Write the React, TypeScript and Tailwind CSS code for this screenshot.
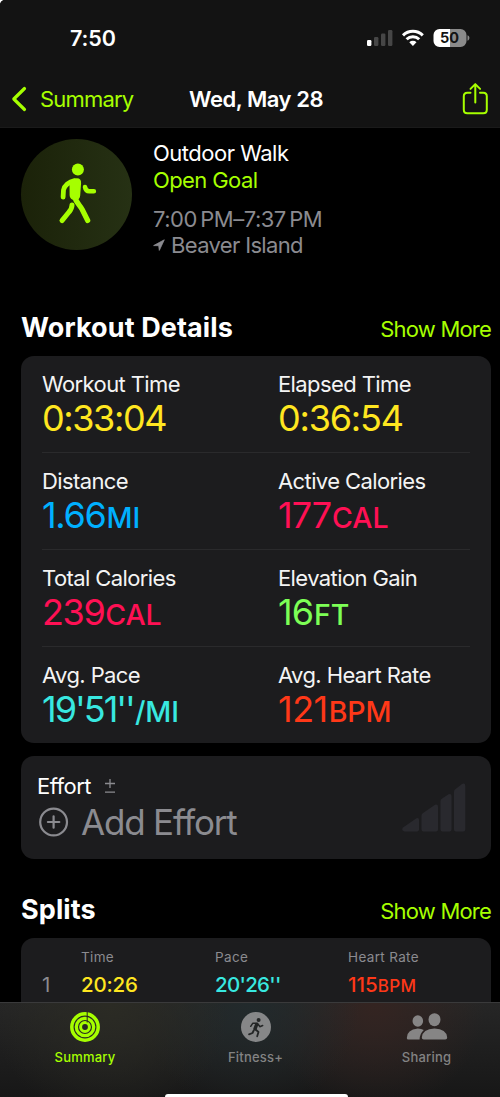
import type { ReactNode } from "react";

interface Metric {
  label: string;
  value: string;
  unit?: string;
  color: string;
  tracking?: string;
}

const METRICS: Metric[][] = [
  [
    { label: "Workout Time", value: "0:33:04", color: "text-[#ffe620]", tracking: "tracking-[-1.4px]" },
    { label: "Elapsed Time", value: "0:36:54", color: "text-[#ffe620]", tracking: "tracking-[-1.2px]" },
  ],
  [
    { label: "Distance", value: "1.66", unit: "MI", color: "text-[#00b0ff]", tracking: "tracking-[-1.3px]" },
    { label: "Active Calories", value: "177", unit: "CAL", color: "text-[#ff1054]" },
  ],
  [
    { label: "Total Calories", value: "239", unit: "CAL", color: "text-[#ff1054]", tracking: "tracking-[-1.4px]" },
    { label: "Elevation Gain", value: "16", unit: "FT", color: "text-[#7dff56]" },
  ],
  [
    { label: "Avg. Pace", value: "19'51''", unit: "/MI", color: "text-[#38e8e0]", tracking: "tracking-[-2px]" },
    { label: "Avg. Heart Rate", value: "121", unit: "BPM", color: "text-[#ff3818]", tracking: "tracking-[-0.5px]" },
  ],
];

function StatusIcons() {
  return (
    <svg width="104" height="20" viewBox="0 0 104 20">
      <rect x="1" y="12" width="4.4" height="6" rx="1.2" fill="#fff" />
      <rect x="8" y="9" width="4.4" height="9" rx="1.2" fill="#464646" />
      <rect x="15" y="5.5" width="4.4" height="12.5" rx="1.2" fill="#464646" />
      <rect x="22" y="2" width="4.4" height="16" rx="1.2" fill="#464646" />
      <g fill="none" stroke="#fff" strokeWidth="3">
        <path d="M37 7.3a14.2 14.2 0 0 1 19.8 0" />
        <path d="M40.6 11.2a9 9 0 0 1 12.6 0" />
      </g>
      <path d="M46.9 17.9 43.3 14.3a5.2 5.2 0 0 1 7.2 0z" fill="#fff" />
      <path d="M84 1h-10.5a6 6 0 0 0-6 6v6a6 6 0 0 0 6 6H84z" fill="#fff" />
      <path d="M84 1h10.5a6 6 0 0 1 6 6v6a6 6 0 0 1-6 6H84z" fill="#8a8a8a" />
      <path d="M101.5 7.3c1.3.5 1.9 1.5 1.9 2.7s-.6 2.2-1.9 2.7z" fill="#8a8a8a" />
      <text x="83.4" y="15.2" textAnchor="middle" className="font-['Inter'] text-[14.5px] font-bold" fill="#131313">
        50
      </text>
    </svg>
  );
}

function WalkIcon() {
  return (
    <svg width="111" height="111" viewBox="0 0 111 111" fill="none" stroke="#a6ff00" strokeLinecap="round" strokeLinejoin="round">
      <circle cx="56.9" cy="30.6" r="6" fill="#a6ff00" stroke="none" />
      <path
        d="M48.5 44.5c1.4-3.2 4.3-5.3 7.3-5.3 3 0 4.5 1.9 4.3 4.7l-.9 12.6c-.2 3.2-2.4 5-5 4.8-3.6-.2-5.6-2.5-5.6-5.6z"
        fill="#a6ff00"
        stroke="none"
      />
      <path d="M53.5 41.6c-5.5 1-10.4 5.3-11 9.4l-.4 7.2" strokeWidth="4.8" />
      <path d="M64 48c.5 2.8 1.9 4.2 4.2 4.2h4.7" strokeWidth="4.5" />
      <path d="M53.5 57.5c1.5 6 5.2 8.5 7.700 13l5.500 11" strokeWidth="5.2" />
      <path d="M51 66c0 2.8-.9 4.6-3 7l-7 8.6" strokeWidth="5" />
    </svg>
  );
}

function EffortBars() {
  return (
    <svg width="64" height="49" viewBox="0 0 64 49" fill="#29292e">
      <path d="M1 44.5 14.5 35.3q2.5-1 2.5 1.7v9.5q0 2-2 2H2.5Q-1 47.5 1 44.5z" />
      <path d="M19.5 32.5q0-1.5 1.3-2.3L33 21.8q3-1 3 2v22.7q0 2-2 2H21.5q-2 0-2-2z" />
      <path d="M38.5 18q0-1.5 1.3-2.3l6.7-4.5q3-1 3 2v33.3q0 2-2 2h-7q-2 0-2-2z" />
      <path d="M52 8.5q0-1.5 1.3-2.3L60 1q3.300-1.5 3.300 2v43.5q0 2-2 2H54q-2 0-2-2z" />
    </svg>
  );
}

function RingsIcon() {
  return (
    <svg width="30" height="30" viewBox="0 0 30 30" fill="none" stroke="#a6ff00" strokeLinecap="round">
      <circle cx="15" cy="15" r="13.2" strokeWidth="3.5" />
      <circle cx="15" cy="15" r="8.7" strokeWidth="3.3" />
      <circle cx="15" cy="15" r="4.4" strokeWidth="3" />
      <path d="M17.2 0v10.5" stroke="#262620" strokeWidth="1" strokeLinecap="butt" />
    </svg>
  );
}

function RunIcon() {
  return (
    <svg width="30" height="30" viewBox="0 0 30 30" fill="none" stroke="#242626" strokeLinecap="round" strokeLinejoin="round">
      <circle cx="15" cy="15" r="15" fill="#868788" stroke="none" />
      <circle cx="17.6" cy="7.9" r="2" fill="#242626" stroke="none" />
      <path d="M15.8 12.2 14 16.8" strokeWidth="3.4" />
      <path d="M15 11.3h-3.3L9.7 14.3" strokeWidth="1.5" />
      <path d="M17.3 12.5l1.5 2.2 2.9-1.2" strokeWidth="1.5" />
      <path d="M14.5 17.5l3 2.5-1.300 4.300" strokeWidth="1.8" />
      <path d="M12.7 18.500l-1.200 2.500-3.500 1.300" strokeWidth="1.8" />
    </svg>
  );
}

function PeopleIcon() {
  return (
    <svg width="42" height="28" viewBox="0 0 42 28" fill="#868585">
      <ellipse cx="11.8" cy="8" rx="5.3" ry="5.8" />
      <ellipse cx="28.5" cy="6.7" rx="6" ry="6.5" />
      <path d="M.8 25q0-8.5 11-9.500 3.500.1 6 1.500-4 3.500-4.200 9.500H2.300Q.8 26.500.8 25z" />
      <path d="M15.8 24.500q.7-8.600 12.700-9 12 .4 12.700 9 0 2-2 2H17.800q-2 0-2-2z" />
    </svg>
  );
}

function SectionTitle({ title }: { title: string }) {
  return (
    <div className="flex h-9 items-baseline justify-between leading-9">
      <h2 className="text-[27px] font-bold tracking-[0.1px]">{title}</h2>
      <a className="text-[22px] tracking-[-0.8px] text-[#a6ff00]">Show More</a>
    </div>
  );
}

function MetricCell({ metric }: { metric: Metric }) {
  return (
    <div className="pt-[15px] pb-[13px] whitespace-nowrap">
      <div className="text-[22px] leading-[26px] tracking-[-0.6px] text-[#f4f4f4]">{metric.label}</div>
      <div className={`h-[42px] text-[36px] leading-[42px] ${metric.color} ${metric.tracking ?? "tracking-[-1px]"}`}>
        {metric.value}
        {metric.unit && <span className="ml-px text-[28.5px] leading-none font-medium tracking-[-0.1px]">{metric.unit}</span>}
      </div>
    </div>
  );
}

function Tab({ label, active, children }: { label: string; active?: boolean; children: ReactNode }) {
  return (
    <div className="flex flex-col items-center pt-[9px]">
      <div className="flex h-[30px] items-center">{children}</div>
      <div className={`mt-[6px] text-[13px] leading-[18px] font-medium tracking-[0.2px] ${active ? "text-[#a6ff00]" : "text-[#838383]"}`}>
        {label}
      </div>
    </div>
  );
}

export default function App() {
  return (
    <div className="flex h-[1097px] w-[500px] flex-col overflow-hidden rounded-tl-[5px] bg-black font-['Inter',sans-serif] text-white">
      <header className="h-32 shrink-0 border-b border-[#1a1a1a] bg-[#131313]">
        <div className="flex h-[76px] items-center justify-between pr-[30px] pl-[70px]">
          <span className="text-[21.5px] font-semibold tracking-[-0.1px]">7:50</span>
          <StatusIcons />
        </div>
        <div className="grid h-[45px] grid-cols-[178px_156px_1fr] items-center px-[11px] text-[22px]">
          <div className="flex items-center gap-[13px] text-[#a6ff00]">
            <svg width="16" height="26" viewBox="0 0 16 26" fill="none" stroke="currentColor" strokeWidth="3.2" strokeLinecap="round" strokeLinejoin="round">
              <path d="M13.5 2.5 2.8 13l10.7 10.5" />
            </svg>
            <span className="pt-[2px] tracking-[-0.8px]">Summary</span>
          </div>
          <span className="pt-[2px] font-semibold tracking-[-0.45px] whitespace-nowrap">Wed, May 28</span>
          <svg className="justify-self-end" width="28" height="34" viewBox="0 0 28 34" fill="none" stroke="#a6ff00" strokeWidth="2" strokeLinecap="round" strokeLinejoin="round">
            <path d="M9.5 10.8H6.3Q2.8 10.8 2.8 14.3v13.4Q2.8 31.2 6.3 31.2h16q3.5 0 3.5-3.5V14.3q0-3.5-3.5-3.5H19" />
            <path d="M14.3 20.5V2.3M9.5 6.9l4.8-4.8 4.8 4.8" />
          </svg>
        </div>
      </header>

      <main className="min-h-0 flex-1 overflow-hidden pr-[9px] pl-[21px]">
        <section className="flex h-[122px] gap-[21px] pt-[11px]">
          <div className="size-[111px] rounded-full bg-linear-to-r from-[#1b2209] to-[#263114]">
            <WalkIcon />
          </div>
          <div className="pt-px text-[22px] leading-[26.5px] tracking-[-0.5px] whitespace-nowrap">
            <div>Outdoor Walk</div>
            <div className="tracking-[-0.6px] text-[#a6ff00]">Open Goal</div>
            <div className="mt-[12.5px] text-[#8b8b90]">7:00&#8201;PM–7:37&#8201;PM</div>
            <div className="flex items-center gap-[6px] tracking-[-0.65px] text-[#8b8b90]">
              <svg width="12" height="12" viewBox="0 0 12 12" fill="currentColor" stroke="currentColor" strokeWidth="0.8" strokeLinejoin="round">
                <path d="M.6 6.6 11.3.8 6.3 11.4l-.6-4.7z" />
              </svg>
              Beaver Island
            </div>
          </div>
        </section>

        <section className="mt-[60px]">
          <SectionTitle title="Workout Details" />
          <div className="mt-[10px] rounded-[13px] bg-[#1c1c1e] px-[21px]">
            {METRICS.map((row) => (
              <div key={row[0].label} className="grid grid-cols-[236px_1fr] border-b border-[#2a2a2c] last:border-b-0">
                {row.map((m) => (
                  <MetricCell key={m.label} metric={m} />
                ))}
              </div>
            ))}
          </div>
        </section>

        <section className="mt-[13px] flex h-[103px] justify-between rounded-[13px] bg-[#1c1c1e] pt-[17px] pr-[25px] pl-4">
          <div>
            <div className="flex items-center gap-[13px] text-[22px] leading-[26px] tracking-[-0.5px]">
              Effort
              <svg width="12" height="16" viewBox="0 0 12 16" fill="none" stroke="#8b8b90" strokeWidth="1.3">
                <path d="M6 1v9M1 5.5h10M1 14.2h10" />
              </svg>
            </div>
            <div className="flex items-center gap-[12px] pl-[2px] text-[35px] leading-[44px] tracking-[-1.2px] text-[#8b8b90]">
              <svg width="30" height="30" viewBox="0 0 30 30" fill="none" stroke="currentColor" strokeWidth="2.2" strokeLinecap="round">
                <circle cx="14.6" cy="15" r="13.4" />
                <path d="M14.6 9.3v11.4M8.9 15h11.4" />
              </svg>
              <span className="pt-px">Add Effort</span>
            </div>
          </div>
          <div className="pt-[10px]">
            <EffortBars />
          </div>
        </section>

        <section className="mt-[33px]">
          <SectionTitle title="Splits" />
          <div className="mt-[10px] h-24 rounded-[13px] bg-[#1c1c1e] px-[21px] pt-[10px]">
            <div className="grid grid-cols-[39px_134px_133px_1fr] text-[13.5px] leading-[18px] tracking-[0.35px] text-[#8b8b90]">
              <span />
              <span>Time</span>
              <span>Pace</span>
              <span>Heart Rate</span>
            </div>
            <div className="mt-[6px] grid h-[26px] grid-cols-[39px_134px_133px_1fr] text-[20.5px] leading-[26px] font-medium">
              <span className="font-normal text-[#8b8b90]">1</span>
              <span className="tracking-[-0.2px] text-[#ffe620]">20:26</span>
              <span className="tracking-[-0.7px] text-[#38e8e0]">20'26''</span>
              <span className="text-[#ff3818]">
                115<span className="text-[17px] leading-none tracking-[0.4px]">BPM</span>
              </span>
            </div>
          </div>
        </section>
      </main>

      <footer className="flex h-[95px] shrink-0 flex-col justify-between overflow-hidden border-t border-[#3a3a3b] bg-[radial-gradient(circle_at_110px_0px,#2b2b24,transparent_120px),radial-gradient(circle_at_250px_0px,#222a2c,transparent_110px),radial-gradient(circle_at_375px_0px,#342421,transparent_110px),linear-gradient(to_bottom,#262626,#171717)]">
        <nav className="grid grid-cols-[170px_171px_171px]">
          <Tab label="Summary" active>
            <RingsIcon />
          </Tab>
          <Tab label="Fitness+">
            <RunIcon />
          </Tab>
          <Tab label="Sharing">
            <PeopleIcon />
          </Tab>
        </nav>
        <div className="ml-[165px] h-[3px] w-[183px] rounded-t-[3px] bg-white" />
      </footer>
    </div>
  );
}
